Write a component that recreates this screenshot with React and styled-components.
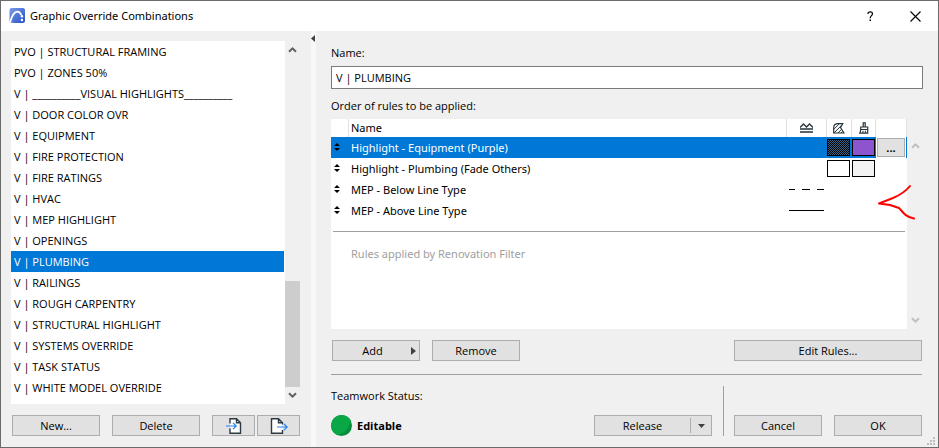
import React, { useState } from "react";
import styled, { createGlobalStyle, css } from "styled-components";

const GlobalStyle = createGlobalStyle`
  *, *::before, *::after { box-sizing: border-box; }
  body {
    margin: 0;
    background: #6b6b6b;
    color: #000;
    font-family: "Open Sans", "Noto Sans", sans-serif;
    font-size: 11px;
    line-height: 16px;
  }
  button, input { font: inherit; color: inherit; }
`;

const Dialog = styled.main`
  display: flex;
  flex-direction: column;
  min-height: 100vh;
  border: 1px solid #6b6b6b;
  background: #f0f0f0;
  position: relative;
`;

const TitleBar = styled.header`
  display: flex;
  align-items: center;
  height: 30px;
  padding-left: 8px;
  background: #fff;
`;

const Title = styled.h1`
  flex: 1;
  margin: 0 0 0 5px;
  font-family: "Noto Sans", sans-serif;
  font-size: 11px;
  font-weight: 400;
`;

const CaptionButton = styled.button`
  display: grid;
  place-items: center;
  width: 45px;
  height: 30px;
  padding: 0;
  border: 0;
  background: transparent;
`;

const Body = styled.div`
  flex: 1;
  display: grid;
  grid-template-columns: 310px minmax(0, 1fr);
`;

const Sidebar = styled.section`
  display: flex;
  flex-direction: column;
  gap: 11px;
  padding: 10px 10px 11px;
`;

const ListFrame = styled.div`
  flex: 1;
  display: flex;
`;

const List = styled.ul`
  flex: 1;
  margin: 0;
  padding: 0 1px 6px 0;
  list-style: none;
  background: #fff;
`;

const ListItem = styled.button`
  display: block;
  width: 100%;
  height: 21px;
  padding: 0 3px;
  border: 0;
  text-align: left;
  line-height: 21px;
  white-space: nowrap;
  background: ${(p) => (p.$selected ? "#0078d7" : "transparent")};
  color: ${(p) => (p.$selected ? "#fff" : "#000")};
`;

const ScrollTrack = styled.div`
  display: flex;
  flex-direction: column;
  justify-content: space-between;
  width: 16px;
  background: #f0f0f0;
`;

const ScrollButton = styled.button`
  display: grid;
  place-items: center;
  width: ${(p) => (p.$faded ? 16 : 15)}px;
  height: 17px;
  padding: 0;
  border: 0;
  background: transparent;
  color: ${(p) => (p.$faded ? "#bfbfbf" : "#606060")};
`;

const ScrollThumb = styled.div`
  width: 15px;
  height: 106px;
  margin-top: auto;
  background: #cdcdcd;
`;

const ButtonRow = styled.div`
  display: flex;
  padding-left: 1px;
  gap: 12px;
`;

const IconButtons = styled.div`
  display: flex;
  gap: 2px;
`;

const PushButton = styled.button`
  display: flex;
  align-items: center;
  justify-content: center;
  flex: none;
  width: ${(p) => p.$width || 88}px;
  height: 21px;
  padding: 0;
  border: 1px solid #adadad;
  background: #e1e1e1;
  line-height: 20px;
`;

const ButtonLabel = styled.span`
  flex: 1;
  text-align: center;
`;

const AddLabel = styled(ButtonLabel)`
  padding-left: 1px;
`;

const AddArrow = styled.svg`
  margin-right: 3px;
`;

const DropPart = styled.span`
  display: grid;
  place-items: center;
  width: 21px;
  height: 15px;
  border-left: 1px solid #adadad;
`;

const Splitter = styled.div`
  width: 5px;
  background: #f8f8f8;
`;

const CollapseArrow = styled.svg`
  display: block;
  margin-top: 4px;
`;

const MainArea = styled.div`
  display: flex;
  min-width: 0;
`;

const Panel = styled.section`
  flex: 1;
  display: flex;
  flex-direction: column;
  min-width: 0;
  padding: 14px 15px 11px;
`;

const Label = styled.label`
  display: block;
  height: 16px;
  margin-bottom: 5px;
`;

const NameInput = styled.input`
  width: 100%;
  height: 23px;
  margin-bottom: 9px;
  padding: 0 4px;
  border: 1px solid #7a7a7a;
  border-radius: 0;
  background: #fff;
`;

const RulesFrame = styled.div`
  flex: 1;
  display: flex;
`;

const RulesBox = styled.div`
  flex: 1;
  background: #fff;
  font-family: "Noto Sans", sans-serif;
`;

const RulesTable = styled.table`
  width: 100%;
  border-collapse: separate;
  border-spacing: 0;
  table-layout: fixed;
`;

const Col = styled.col`
  width: ${(p) => (p.$width ? `${p.$width}px` : "auto")};
`;

const HeadCell = styled.th`
  height: 18px;
  padding: 0 0 0 ${(p) => (p.$text ? 2 : 0)}px;
  border-right: 1px solid #e0e0e0;
  font-weight: 400;
  line-height: 18px;
  text-align: ${(p) => (p.$text ? "left" : "center")};
  svg { display: block; margin: auto; }
`;

const Row = styled.tr`
  ${(p) =>
    p.$selected &&
    css`
      background: #0078d7;
      color: #fff;
    `}
`;

const Cell = styled.td`
  height: 21px;
  padding: 0 0 0 ${(p) => p.$pad || 0}px;
  line-height: 21px;
  white-space: nowrap;
  svg { display: block; color: #000; }
`;

const Swatch = styled.span`
  display: block;
  width: 23px;
  height: 17px;
  border: 1px solid #000;
  background: ${(p) => p.$fill};
  background-size: 2px 2px;
`;

const MoreButton = styled.button`
  display: block;
  width: 30px;
  height: 21px;
  padding: 0;
  border: 1px solid #fff;
  outline: 1px solid #adadad;
  outline-offset: -2px;
  background: #e1e1e1;
  color: #000;
  font-weight: 700;
  line-height: 17px;
`;

const RulesDivider = styled.hr`
  height: 1px;
  margin: 10px 2px 11px;
  border: 0;
  background: #a0a0a0;
`;

const FilterNote = styled.p`
  margin: 0;
  padding-left: 20px;
  line-height: 21px;
  color: #a0a0a0;
`;

const RulesScroll = styled.div`
  display: flex;
  flex-direction: column;
  justify-content: space-between;
  padding-top: 18px;
`;

const Actions = styled(ButtonRow)`
  margin-top: 11px;
  padding-right: 1px;
`;

const EditSlot = styled.div`
  margin-left: auto;
`;

const Rule = styled.hr`
  width: calc(100% - 1px);
  height: 1px;
  margin: 13px 0 11px;
  border: 0;
  background: #a0a0a0;
`;

const Footer = styled.footer`
  display: flex;
  align-items: flex-end;
  height: 50px;
  padding-right: 1px;
`;

const Teamwork = styled.div`
  flex: 1;
  align-self: stretch;
  display: flex;
  flex-direction: column;
  justify-content: space-between;
  padding-top: 2px;
`;

const Status = styled.div`
  display: flex;
  align-items: center;
  gap: 5px;
  height: 21px;
  font-weight: 700;
`;

const FooterLine = styled.div`
  align-self: stretch;
  width: 1px;
  margin: 0 10px 0 11px;
  background: #a0a0a0;
`;

const ConfirmButtons = styled.div`
  display: flex;
  gap: 12px;
`;

const Annotation = styled.svg`
  position: absolute;
  top: 182px;
  right: 22px;
`;

const Grip = styled.svg`
  position: absolute;
  right: 2px;
  bottom: 1px;
`;

const combinations = [
  "PVO | STRUCTURAL FRAMING",
  "PVO | ZONES 50%",
  "V | __________VISUAL HIGHLIGHTS__________",
  "V | DOOR COLOR OVR",
  "V | EQUIPMENT",
  "V | FIRE PROTECTION",
  "V | FIRE RATINGS",
  "V | HVAC",
  "V | MEP HIGHLIGHT",
  "V | OPENINGS",
  "V | PLUMBING",
  "V | RAILINGS",
  "V | ROUGH CARPENTRY",
  "V | STRUCTURAL HIGHLIGHT",
  "V | SYSTEMS OVERRIDE",
  "V | TASK STATUS",
  "V | WHITE MODEL OVERRIDE",
];

const rules = [
  {
    name: "Highlight - Equipment (Purple)",
    fill: "conic-gradient(#000 25%, #35648c 0 50%, #000 0 75%, #35648c 0)",
    surface: "#8c55cf",
    selected: true,
  },
  { name: "Highlight - Plumbing (Fade Others)", fill: "#fff", surface: "#f3f3f3" },
  { name: "MEP - Below Line Type", line: "dashed" },
  { name: "MEP - Above Line Type", line: "solid" },
];

const Chevron = ({ down }) => (
  <svg width="9" height="7" viewBox="0 0 9 7" aria-hidden="true">
    <path
      d={down ? "M1 1.2 4.5 4.7 8 1.2" : "M1 5.8 4.5 2.3 8 5.8"}
      fill="none"
      stroke="currentColor"
      strokeWidth="2"
    />
  </svg>
);

const AppIcon = () => (
  <svg width="16" height="16" viewBox="0 0 16 16" aria-hidden="true">
    <defs>
      <linearGradient id="logo" x1="0" y1="0" x2="1" y2="1">
        <stop offset="0" stopColor="#7b9aea" />
        <stop offset="1" stopColor="#2754c5" />
      </linearGradient>
    </defs>
    <path d="M2.5 0H14a2 2 0 0 1 2 2v11a2 2 0 0 1-2 2H5.500L1 14.500.5 13V2a2 2 0 0 1 2-2z" fill="url(#logo)" />
    <path d="M1 14.500C2.500 9 5 3.800 8.200 3.600c2.200-.1 3.400 1.700 4 3.400" fill="none" stroke="#fff" strokeWidth="1.8" />
    <circle cx="12.900" cy="8.200" r="1.200" fill="#fff" />
    <circle cx="12.900" cy="12" r="1.200" fill="#fff" />
  </svg>
);

const ImportIcon = () => (
  <svg width="16" height="16" viewBox="0 0 16 16" aria-hidden="true">
    <path d="M4 .7h6.500l4 4v10.600H4z" fill="#fff" />
    <path d="M4 5.500V.7h6.500l4 4v10.600H4v-5M10.500.7v4h4" fill="none" stroke="#2b3a42" strokeWidth="1.4" />
    <path d="M0 8h10M7 4.800 10.200 8 7 11.200" fill="none" stroke="#2680eb" strokeWidth="1.200" />
  </svg>
);

const ExportIcon = () => (
  <svg width="18" height="16" viewBox="0 0 18 16" aria-hidden="true">
    <path d="M1.500.7h7l4 4v10.600h-11z" fill="#fff" />
    <path d="M12.500 6.500V4.700l-4-4h-7v14.600h11V12M8.500.7v4h4" fill="none" stroke="#2b3a42" strokeWidth="1.400" />
    <path d="M7 9h10M14 5.800 17.200 9 14 12.200" fill="none" stroke="#2680eb" strokeWidth="1.200" />
  </svg>
);

const LineTypeIcon = () => (
  <svg width="13" height="10" viewBox="0 0 13 10" aria-hidden="true">
    <path d="M0 4.500 3.500 1l3 3 3-3L13 4.500" fill="none" stroke="#26343b" strokeWidth="1.300" />
    <path d="M0 6h13M0 9h13" fill="none" stroke="#26343b" strokeWidth="1.600" />
  </svg>
);

const FillIcon = () => (
  <svg width="12" height="11" viewBox="0 0 12 11" aria-hidden="true">
    <path
      d="M.7 10V5C.7 2.200 2.500.7 5 .7h4.800L7.500 4.500 11 10z"
      fill="#fff"
      stroke="#26343b"
      strokeWidth="1.200"
    />
    <path d="M.8 6.300 6.300.8M1 10 8.800 2M5 10l3.300-3.500M8 10l1.500-1.500" stroke="#26343b" strokeWidth="1" />
  </svg>
);

const BrushIcon = () => (
  <svg width="10" height="12" viewBox="0 0 10 12" aria-hidden="true">
    <path d="M4.200 5V.8h2V5M1.700 7.500V5h7v2.500H1.700C1.700 9.500 1.200 10 .7 11.200h8V7.500" fill="#fff" stroke="#26343b" strokeWidth="1.200" />
    <path d="M4 8.800V11M6.400 8.800V11" stroke="#26343b" />
  </svg>
);

const SortHandle = () => (
  <svg width="6" height="9" viewBox="0 0 6 9" aria-hidden="true">
    <path d="M3 0 6 3H0zM0 5h6L3 8z" fill="currentColor" />
  </svg>
);

const LineSample = ({ kind }) => (
  <svg width="35" height="1" viewBox="0 0 35 1" aria-label={`${kind} line`}>
    {kind === "dashed" ? (
      <path d="M0 .5h6M13 .5h8M28 .5h7" stroke="currentColor" />
    ) : (
      <path d="M0 .5h35" stroke="currentColor" />
    )}
  </svg>
);

export default function App() {
  const [selected, setSelected] = useState("V | PLUMBING");

  return (
    <>
      <GlobalStyle />
      <Dialog>
        <TitleBar>
          <AppIcon />
          <Title>Graphic Override Combinations</Title>
          <CaptionButton aria-label="Help">
            <svg width="7" height="11" viewBox="0 0 7 11" aria-hidden="true">
              <path d="M1 3V2.200C1.200 1.200 2 .8 3.200.8S5.500 1.500 5.500 2.700C5.500 4.600 3.200 4.600 3.200 7.200" fill="none" stroke="#000" strokeWidth="1.200" />
              <path d="M2.500 8.600h1.500v1.500H2.500z" />
            </svg>
          </CaptionButton>
          <CaptionButton aria-label="Close">
            <svg width="11" height="11" viewBox="0 0 11 11" aria-hidden="true">
              <path d="M.5.5l10 10M10.500.5l-10 10" stroke="#000" strokeWidth="1.100" />
            </svg>
          </CaptionButton>
        </TitleBar>

        <Body>
          <Sidebar>
            <ListFrame>
              <List aria-label="Combinations">
                {combinations.map((item) => (
                  <li key={item}>
                    <ListItem
                      $selected={item === selected}
                      aria-pressed={item === selected}
                      onClick={() => setSelected(item)}
                    >
                      {item}
                    </ListItem>
                  </li>
                ))}
              </List>
              <ScrollTrack>
                <ScrollButton aria-label="Scroll up"><Chevron /></ScrollButton>
                <ScrollThumb />
                <ScrollButton aria-label="Scroll down"><Chevron down /></ScrollButton>
              </ScrollTrack>
            </ListFrame>
            <ButtonRow>
              <PushButton>New...</PushButton>
              <PushButton>Delete</PushButton>
              <IconButtons>
                <PushButton $width={43} aria-label="Import"><ImportIcon /></PushButton>
                <PushButton $width={43} aria-label="Export"><ExportIcon /></PushButton>
              </IconButtons>
            </ButtonRow>
          </Sidebar>

          <MainArea>
            <Splitter>
              <CollapseArrow width="4" height="7" viewBox="0 0 4 7" aria-hidden="true">
                <path d="M4 0v7L0 3.500z" fill="#404040" />
              </CollapseArrow>
            </Splitter>
            <Panel>
              <Label htmlFor="name">Name:</Label>
              <NameInput id="name" defaultValue="V | PLUMBING" />
              <Label as="div" id="rules-label">Order of rules to be applied:</Label>
              <RulesFrame>
                <RulesBox>
                  <RulesTable aria-labelledby="rules-label">
                    <colgroup>
                      <Col $width={18} />
                      <Col />
                      <Col $width={40} />
                      <Col $width={25} />
                      <Col $width={24} />
                      <Col $width={31} />
                    </colgroup>
                    <thead>
                      <tr>
                        <HeadCell aria-label="Order" />
                        <HeadCell $text>Name</HeadCell>
                        <HeadCell aria-label="Line type"><LineTypeIcon /></HeadCell>
                        <HeadCell aria-label="Fill"><FillIcon /></HeadCell>
                        <HeadCell aria-label="Surface"><BrushIcon /></HeadCell>
                        <HeadCell aria-label="Options" />
                      </tr>
                    </thead>
                    <tbody>
                      {rules.map((rule) => (
                        <Row key={rule.name} $selected={rule.selected}>
                          <Cell $pad={3}><SortHandle /></Cell>
                          <Cell $pad={2}>{rule.name}</Cell>
                          <Cell $pad={2}>{rule.line && <LineSample kind={rule.line} />}</Cell>
                          <Cell>{rule.fill && <Swatch $fill={rule.fill} />}</Cell>
                          <Cell>{rule.surface && <Swatch $fill={rule.surface} />}</Cell>
                          <Cell>{rule.selected && <MoreButton aria-label="More">...</MoreButton>}</Cell>
                        </Row>
                      ))}
                    </tbody>
                  </RulesTable>
                  <RulesDivider />
                  <FilterNote>Rules applied by Renovation Filter</FilterNote>
                </RulesBox>
                <RulesScroll>
                  <ScrollButton $faded aria-label="Scroll rules up"><Chevron /></ScrollButton>
                  <ScrollButton $faded aria-label="Scroll rules down"><Chevron down /></ScrollButton>
                </RulesScroll>
              </RulesFrame>
              <Actions>
                <PushButton>
                  <AddLabel>Add</AddLabel>
                  <AddArrow width="5" height="8" viewBox="0 0 5 8" aria-hidden="true">
                    <path d="M0 0v8l5-4z" fill="#404040" />
                  </AddArrow>
                </PushButton>
                <PushButton>Remove</PushButton>
                <EditSlot><PushButton $width={188}>Edit Rules...</PushButton></EditSlot>
              </Actions>
              <Rule />
              <Footer>
                <Teamwork>
                  <span>Teamwork Status:</span>
                  <Status>
                    <svg width="21" height="21" viewBox="0 0 21 21" aria-hidden="true">
                      <circle cx="10.500" cy="10.500" r="10.500" fill="#078c3c" />
                      <path d="M19.600 5.200A10.500 10.500 0 1 0 5.200 19.600C13 19.800 19 13 19.600 5.200z" fill="#09a746" />
                    </svg>
                    Editable
                  </Status>
                </Teamwork>
                <PushButton $width={118}>
                  <ButtonLabel>Release</ButtonLabel>
                  <DropPart>
                    <svg width="7" height="4" viewBox="0 0 7 4" aria-hidden="true">
                      <path d="M0 0h7L3.500 4z" fill="#404040" />
                    </svg>
                  </DropPart>
                </PushButton>
                <FooterLine />
                <ConfirmButtons>
                  <PushButton>Cancel</PushButton>
                  <PushButton>OK</PushButton>
                </ConfirmButtons>
              </Footer>
            </Panel>
          </MainArea>
        </Body>
        <Annotation width="40" height="38" viewBox="0 0 40 38" aria-hidden="true">
          <path d="M34 3C30 8 24 12 17 15L3 20.500l11 1.500 9 3c4 4 6 9 15 10.500" fill="none" stroke="#f00" strokeWidth="2" strokeLinecap="round" strokeLinejoin="round" />
        </Annotation>
        <Grip width="9" height="9" viewBox="0 0 9 9" aria-hidden="true">
          <path d="M6 0h2v2H6zM3 3h2v2H3zM6 3h2v2H6zM0 6h2v2H0zM3 6h2v2H3zM6 6h2v2H6z" fill="#bdbdbd" />
        </Grip>
      </Dialog>
    </>
  );
}
